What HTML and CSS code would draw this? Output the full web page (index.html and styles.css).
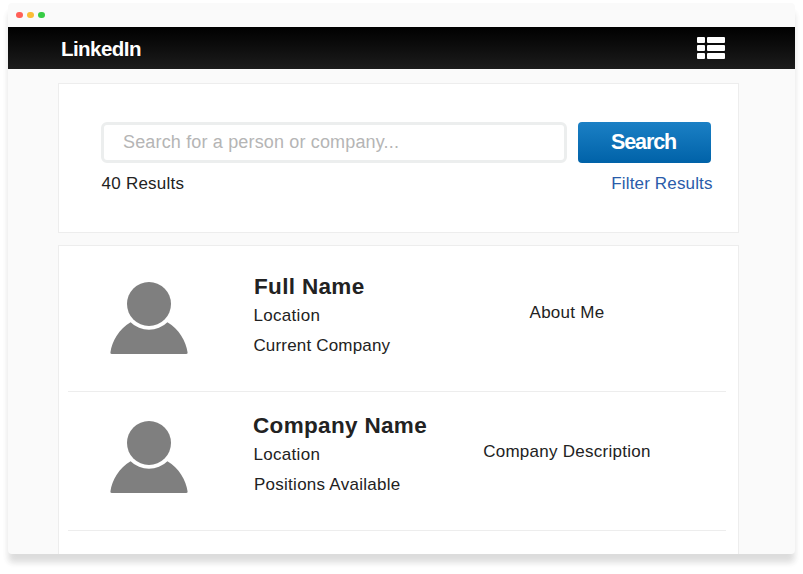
FILE: index.html
```html
<!DOCTYPE html>
<html lang="en">
<head>
<meta charset="utf-8">
<title>LinkedIn</title>
<link rel="stylesheet" href="styles.css">
</head>
<body>
<div class="window">
  <div class="titlebar">
    <span class="dot red"></span><span class="dot yellow"></span><span class="dot green"></span>
  </div>
  <header class="header">
    <div class="brand">LinkedIn</div>
    <svg class="menu" width="28" height="22" viewBox="0 0 28 22" fill="#fff">
      <rect width="8" height="6" rx="1"/><rect x="10" width="18" height="6" rx="1"/>
      <rect y="8" width="8" height="6" rx="1"/><rect x="10" y="8" width="18" height="6" rx="1"/>
      <rect y="16" width="8" height="6" rx="1"/><rect x="10" y="16" width="18" height="6" rx="1"/>
    </svg>
  </header>
  <main class="content">
    <section class="panel search">
      <form class="search-row">
        <input class="field" type="text" placeholder="Search for a person or company...">
        <button class="button" type="button">Search</button>
      </form>
      <div class="meta"><span class="count">40 Results</span><a class="filter">Filter Results</a></div>
    </section>
    <section class="panel results">
      <article class="row">
        <svg class="avatar" width="78" height="73" viewBox="0 0 78 73" fill="#7f7f7f">
          <circle cx="39" cy="22" r="22"/>
          <path d="M20.6 40.2A26 26 0 0 0 57.4 40.2C69 47 76 59 77.6 70.5Q77.8 72 76 72H2Q.2 72 .4 70.5C2 59 9 47 20.6 40.2Z"/>
        </svg>
        <div class="info">
          <h2 class="name full">Full Name</h2>
          <p class="line location">Location</p>
          <p class="line current">Current Company</p>
        </div>
        <p class="about">About Me</p>
      </article>
      <article class="row">
        <svg class="avatar" width="78" height="73" viewBox="0 0 78 73" fill="#7f7f7f">
          <circle cx="39" cy="22" r="22"/>
          <path d="M20.6 40.2A26 26 0 0 0 57.4 40.2C69 47 76 59 77.6 70.5Q77.8 72 76 72H2Q.2 72 .4 70.5C2 59 9 47 20.6 40.2Z"/>
        </svg>
        <div class="info">
          <h2 class="name">Company Name</h2>
          <p class="line location">Location</p>
          <p class="line positions">Positions Available</p>
        </div>
        <p class="about">Company Description</p>
      </article>
    </section>
  </main>
</div>
</body>
</html>
```
FILE: styles.css
```css
* { box-sizing: border-box; }
body {
  margin: 0;
  padding: 3px 8px 0;
  height: 574px;
  overflow: hidden;
  background: #fff;
  color: #222;
  font-family: "Liberation Sans", Arial, sans-serif;
  font-size: 17px;
}
h2, p { margin: 0; }
.window {
  width: 787px;
  height: 551px;
  display: flex;
  flex-direction: column;
  overflow: hidden;
  border-radius: 4px;
  background: #fafafa;
  box-shadow: 0 9px 6px -1px #dcdcdc, 0 8px 8px rgba(0, 0, 0, .03);
}
.titlebar {
  height: 24px;
  flex: none;
  display: flex;
  align-items: center;
  gap: 4.4px;
  padding: 0 8.2px;
}
.dot { width: 6.6px; height: 6.6px; border-radius: 50%; }
.red { background: #ff5f57; }
.yellow { background: #fbbd36; }
.green { background: #37cc45; }
.header {
  height: 42px;
  flex: none;
  display: flex;
  align-items: center;
  justify-content: space-between;
  padding: 0 70px 0 53px;
  background: linear-gradient(#000, #1c1c1c);
}
.brand {
  color: #fff;
  font-size: 20.5px;
  font-weight: bold;
  letter-spacing: -.55px;
  line-height: 42px;
  padding-top: 2px;
}
.content {
  flex: 1;
  min-height: 0;
  padding: 14px 56px 0 50px;
}
.panel {
  background: #fff;
  border: 1px solid #ededed;
}
.search {
  height: 150px;
  padding: 38px 26px 0 42px;
}
.search-row {
  display: flex;
  gap: 11px;
  padding-right: 1px;
}
.field {
  flex: 1;
  min-width: 0;
  height: 41px;
  padding: 0 19px;
  border: 3px solid #eceeee;
  border-radius: 6px;
  background: #fff;
  font: 18px "Liberation Sans", Arial, sans-serif;
  letter-spacing: .16px;
}
.field::placeholder { color: #b5b5b5; opacity: 1; }
.button {
  width: 133px;
  height: 41px;
  border: 0;
  padding: 0 2px 0 0;
  border-radius: 4px;
  background: linear-gradient(#1b80c5, #0062a8);
  color: #fff;
  font: bold 21.5px "Liberation Sans", Arial, sans-serif;
  letter-spacing: -1.1px;
}
.meta {
  display: flex;
  justify-content: space-between;
  line-height: 30px;
  padding-top: 6px;
  letter-spacing: .15px;
}
.count { padding-left: .6px; letter-spacing: .22px; }
.filter { color: #2a5caa; margin-right: -.6px; }
.results {
  margin-top: 12px;
  height: 330px;
  padding: 7px 12px 0 9px;
}
.row {
  height: 139px;
  display: grid;
  grid-template-columns: 185px 210px 1fr;
  border-bottom: 1px solid #ededed;
}
.avatar { margin: 29px 0 0 42px; }
.info { padding-top: 19px; }
.name {
  height: 29px;
  font-size: 22.5px;
  line-height: 30px;
  letter-spacing: .33px;
}
.full { padding-left: 1px; }
.line { line-height: 30px; letter-spacing: .18px; }
.location { padding-left: .5px; letter-spacing: .3px; }
.current { padding-left: .4px; }
.positions { padding-left: 1px; letter-spacing: .26px; }
.about {
  margin-top: 45px;
  width: 208px;
  text-align: center;
  line-height: 30px;
  letter-spacing: .27px;
}
```
